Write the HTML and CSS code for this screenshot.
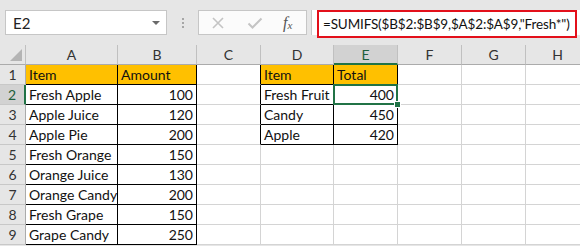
FILE: index.html
```html
<!DOCTYPE html>
<html>
<head>
<meta charset="utf-8">
<link rel="stylesheet" href="styles.css">
</head>
<body>
<div class="toolbar">
  <div class="namebox"><span class="name">E2</span><span class="dd"></span></div>
  <div class="dots"><i></i><i></i><i></i></div>
  <div class="fbtns">
    <svg class="ico" width="14" height="14" viewBox="0 0 14 14"><path d="M2 2L12 12M12 2L2 12" stroke="#c4c4c4" stroke-width="1.6" fill="none"/></svg>
    <svg class="ico" width="16" height="14" viewBox="0 0 16 14"><path d="M1.5 7.5L5.5 11.5L14.5 2.5" stroke="#c4c4c4" stroke-width="2" fill="none"/></svg>
    <span class="fx">f<sub>x</sub></span>
  </div>
  <div class="finput"><span class="formula">=SUMIFS($B$2:$B$9,$A$2:$A$9,"Fresh*")</span></div>
</div>
<div class="sheet">
  <div class="ch corner"><span class="tri"></span></div>
  <div class="ch">A</div><div class="ch">B</div><div class="ch">C</div><div class="ch">D</div><div class="ch sel">E</div><div class="ch">F</div><div class="ch">G</div><div class="ch">H</div>

  <div class="rh">1</div>
  <div class="c t hd">Item</div><div class="c t hd">Amount</div><div class="c tl"></div>
  <div class="c t hd">Item</div><div class="c t hd">Total</div><div class="c"></div><div class="c"></div><div class="c"></div>

  <div class="rh sel">2</div>
  <div class="c t">Fresh Apple</div><div class="c t n">100</div><div class="c tl"></div>
  <div class="c t">Fresh Fruit</div><div class="c t n active">400</div><div class="c"></div><div class="c"></div><div class="c"></div>

  <div class="rh">3</div>
  <div class="c t">Apple Juice</div><div class="c t n">120</div><div class="c tl"></div>
  <div class="c t">Candy</div><div class="c t n">450</div><div class="c"></div><div class="c"></div><div class="c"></div>

  <div class="rh">4</div>
  <div class="c t">Apple Pie</div><div class="c t n">200</div><div class="c tl"></div>
  <div class="c t">Apple</div><div class="c t n">420</div><div class="c"></div><div class="c"></div><div class="c"></div>

  <div class="rh">5</div>
  <div class="c t">Fresh Orange</div><div class="c t n">150</div><div class="c"></div>
  <div class="c"></div><div class="c"></div><div class="c"></div><div class="c"></div><div class="c"></div>

  <div class="rh">6</div>
  <div class="c t">Orange Juice</div><div class="c t n">130</div><div class="c"></div>
  <div class="c"></div><div class="c"></div><div class="c"></div><div class="c"></div><div class="c"></div>

  <div class="rh">7</div>
  <div class="c t">Orange Candy</div><div class="c t n">200</div><div class="c"></div>
  <div class="c"></div><div class="c"></div><div class="c"></div><div class="c"></div><div class="c"></div>

  <div class="rh">8</div>
  <div class="c t">Fresh Grape</div><div class="c t n">150</div><div class="c"></div>
  <div class="c"></div><div class="c"></div><div class="c"></div><div class="c"></div><div class="c"></div>

  <div class="rh">9</div>
  <div class="c t">Grape Candy</div><div class="c t n">250</div><div class="c"></div>
  <div class="c"></div><div class="c"></div><div class="c"></div><div class="c"></div><div class="c"></div>
</div>
</body>
</html>
```
FILE: styles.css
```css
html, body {
  margin: 0;
  padding: 0;
  background: #e6e6e6;
  overflow: hidden;
}
body {
  width: 580px;
  height: 246px;
  font-family: Lato, "Open Sans", sans-serif;
}
.toolbar {
  height: 45px;
  box-sizing: border-box;
  padding: 10px 0 0 5px;
  display: flex;
  align-items: flex-start;
}
.namebox {
  width: 162px;
  height: 25px;
  box-sizing: border-box;
  background: #fff;
  border: 1px solid #c6c6c6;
  display: flex;
  align-items: center;
  justify-content: space-between;
  padding: 0 6px 0 7px;
}
.name {
  font-size: 15px;
  color: #222;
}
.dd {
  width: 0;
  height: 0;
  border-left: 4px solid transparent;
  border-right: 4px solid transparent;
  border-top: 4px solid #6a6a6a;
}
.dots {
  width: 31px;
  height: 25px;
  display: flex;
  flex-direction: column;
  align-items: center;
  justify-content: center;
  gap: 2px;
}
.dots i {
  width: 2px;
  height: 2px;
  background: #a6a6a6;
}
.fbtns {
  width: 109px;
  height: 25px;
  box-sizing: border-box;
  background: #fbfbfb;
  border: 1px solid #c6c6c6;
  display: flex;
  align-items: center;
  padding-left: 12px;
  gap: 22px;
}
.fx {
  font-family: "Liberation Serif", serif;
  font-style: italic;
  font-size: 16px;
  color: #555;
  margin-left: -2px;
}
.fx sub {
  font-size: 11px;
  vertical-align: -1px;
}
.finput {
  margin-left: 4px;
  flex: 1;
  height: 25px;
  background: #fff;
  border-left: 1px solid #c6c6c6;
  position: relative;
}
.formula {
  position: absolute;
  left: 5px;
  top: 0;
  width: 260px;
  height: 28px;
  box-sizing: border-box;
  border: 2px solid #e3101b;
  padding-left: 4px;
  font-family: Lato, "Open Sans", sans-serif;
  font-size: 13.5px;
  letter-spacing: -0.15px;
  line-height: 24px;
  color: #111;
  white-space: nowrap;
  background: #fff;
}
.sheet {
  display: grid;
  grid-template-columns: 26px 92px 79px 64px 73px 64px 64px 64px 64px;
  grid-auto-rows: 20px;
  background: #fff;
}
.sheet > div {
  box-sizing: border-box;
  border-right: 1px solid #d4d4d4;
  border-bottom: 1px solid #d4d4d4;
  font-size: 14px;
  line-height: 19px;
  white-space: nowrap;
  overflow: visible;
}
.sheet > .ch {
  background: #e6e6e6;
  border-right: 1px solid #c0c0c0;
  border-bottom: 1px solid #ababab;
  text-align: center;
  color: #333;
}
.sheet > .ch.sel {
  background: #d2d2d2;
  border-bottom: 2px solid #217346;
  color: #1d5f3b;
}
.corner {
  position: relative;
}
.tri {
  position: absolute;
  right: 3px;
  bottom: 3px;
  width: 0;
  height: 0;
  border-left: 12px solid transparent;
  border-bottom: 12px solid #b4b4b4;
}
.sheet > .rh {
  background: #e6e6e6;
  border-right: 1px solid #ababab;
  border-bottom: 1px solid #c8c8c8;
  text-align: center;
  color: #333;
}
.sheet > .rh.sel {
  background: #d2d2d2;
  border-right: 2px solid #217346;
  color: #1d5f3b;
}
.c {
  padding: 0 3px;
  color: #111;
}
.sheet > .t {
  border-right-color: #000;
  border-bottom-color: #000;
}
.sheet > .tl {
  border-right-color: #000;
}
.hd {
  background: #ffc000;
}
.n {
  text-align: right;
}
.active {
  position: relative;
}
.active::after {
  content: "";
  position: absolute;
  left: -1px;
  top: -1px;
  right: -1px;
  bottom: -1px;
  border: 2px solid #217346;
}
.active::before {
  content: "";
  position: absolute;
  right: -4px;
  bottom: -4px;
  width: 5px;
  height: 5px;
  background: #217346;
  border: 1px solid #fff;
  z-index: 2;
}
```
